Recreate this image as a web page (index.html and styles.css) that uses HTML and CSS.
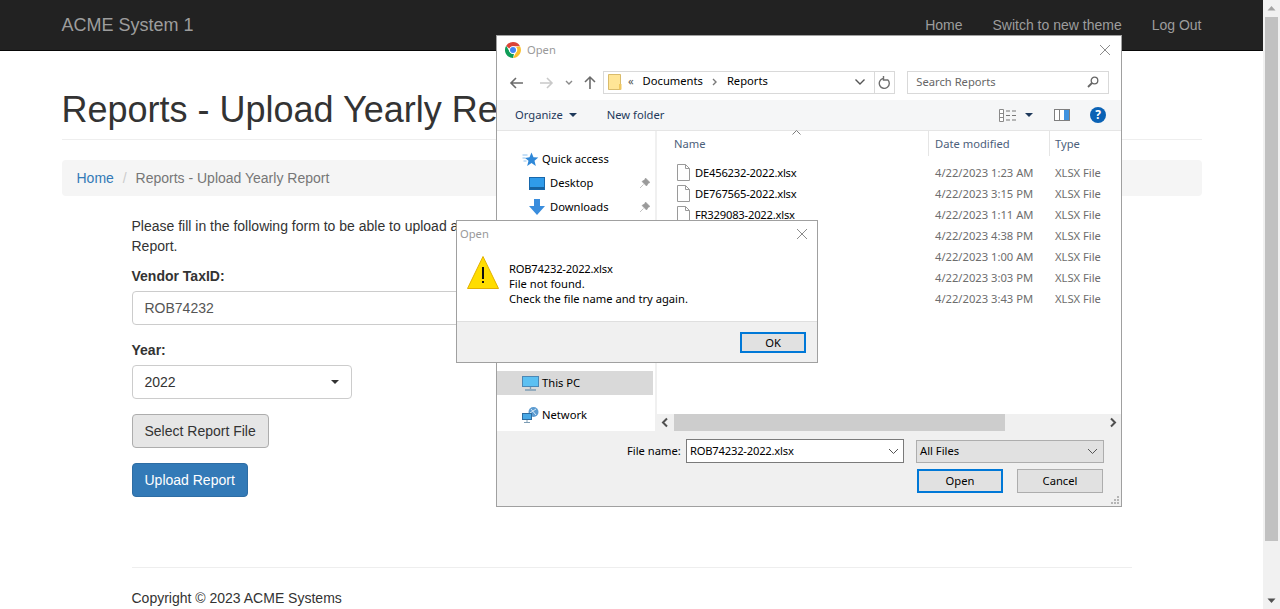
FILE: index.html
```html
<!DOCTYPE html>
<html lang="en">
<head>
  <meta charset="UTF-8">
  <meta name="viewport" content="width=device-width, initial-scale=1.0">
  <title>Reports - Upload Yearly Report</title>
  <link rel="stylesheet" href="styles.css">
</head>
<body>

<div class="page">
  <!-- Navbar -->
  <nav class="navbar">
    <a class="brand" href="#">ACME System 1</a>
    <div class="nav-links">
      <a href="#">Home</a>
      <a href="#">Switch to new theme</a>
      <a href="#">Log Out</a>
    </div>
  </nav>

  <div class="container">
    <h1 class="page-header">Reports - Upload Yearly Report</h1>

    <div class="breadcrumb">
      <a href="#">Home</a>
      <span class="crumb-sep">/</span>
      <span class="crumb-active">Reports - Upload Yearly Report</span>
    </div>

    <form class="report-form">
      <p class="intro">Please fill in the following form to be able to upload a<br>Report.</p>

      <div class="form-group">
        <label for="vendor">Vendor TaxID:</label>
        <input id="vendor" class="form-control" type="text" value="ROB74232">
      </div>

      <div class="form-group">
        <label>Year:</label>
        <div class="form-select"><span>2022</span><i class="caret"></i></div>
      </div>

      <div class="form-group"><button type="button" class="btn btn-default">Select Report File</button></div>
      <div class="form-group"><button type="button" class="btn btn-primary">Upload Report</button></div>

      <footer class="page-footer">Copyright © 2023 ACME Systems</footer>
    </form>
  </div>
</div>

<!-- Browser scrollbar -->
<div class="page-scrollbar">
  <svg class="scroll-arrow" width="17" height="17" viewBox="0 0 17 17"><path d="M4.5 10.5 L8.5 6 L12.5 10.5 Z" fill="#a3a3a3"/></svg>
  <div class="page-scroll-thumb"></div>
  <svg class="scroll-arrow scroll-arrow-end" width="17" height="17" viewBox="0 0 17 17"><path d="M4.5 6.5 L8.5 11 L12.5 6.5 Z" fill="#505050"/></svg>
</div>

<!-- Windows file dialog -->
<div class="win file-dialog">
  <div class="win-title">
    <svg class="chrome-icon" width="16" height="16" viewBox="0 0 16 16">
      <path d="M8 0 A8 8 0 0 1 15 4.2 L8 4.2 A3.8 3.8 0 0 0 4.4 6.8 L1.2 3.8 A8 8 0 0 1 8 0 Z" fill="#db4437"/>
      <path d="M15 4.2 A8 8 0 0 1 8 16 L11.2 10.2 A3.8 3.8 0 0 0 11 5 L15 4.2 Z" fill="#fbc02d"/>
      <path d="M8 16 A8 8 0 0 1 1.2 3.8 L4.6 9.8 A3.8 3.8 0 0 0 9 11.7 L8 16 Z" fill="#0f9d58"/>
      <circle cx="8" cy="8" r="3.8" fill="#fff"/>
      <circle cx="8" cy="8" r="3" fill="#4285f4"/>
    </svg>
    <span class="win-title-text">Open</span>
    <svg class="win-close" width="12" height="12" viewBox="0 0 12 12"><path d="M1 1 L11 11 M11 1 L1 11" stroke="#8c8c8c" fill="none"/></svg>
  </div>

  <div class="addr-row">
    <svg class="nav-arrow" width="15" height="14" viewBox="0 0 15 14"><path d="M14 7 H2 M7 2 L2 7 L7 12" stroke="#6b6b6b" stroke-width="1.6" fill="none"/></svg>
    <svg class="nav-arrow nav-forward" width="15" height="14" viewBox="0 0 15 14"><path d="M1 7 H13 M8 2 L13 7 L8 12" stroke="#c9c9c9" stroke-width="1.6" fill="none"/></svg>
    <svg class="nav-down" width="8" height="6" viewBox="0 0 8 6"><path d="M1 1 L4 4 L7 1" stroke="#8a8a8a" stroke-width="1.4" fill="none"/></svg>
    <svg class="nav-up" width="14" height="15" viewBox="0 0 14 15"><path d="M7 14 V2 M2 7 L7 2 L12 7" stroke="#6b6b6b" stroke-width="1.6" fill="none"/></svg>

    <div class="addr-box">
      <svg class="addr-folder" width="14" height="16" viewBox="0 0 14 16"><path d="M.5.5 H12.5 V15.5 H.5 Z" fill="#ffe596" stroke="#d9bb6b"/><path d="M11 10 H13.5 V15.5 H11 Z" fill="#f0c75e"/></svg>
      <span class="addr-text addr-chev">«</span>
      <span class="addr-text">Documents</span>
      <svg class="addr-sep" width="6" height="8" viewBox="0 0 6 8"><path d="M1 1 L4 4 L1 7" stroke="#7a7a7a" stroke-width="1.4" fill="none"/></svg>
      <span class="addr-text">Reports</span>
      <svg class="addr-drop" width="12" height="8" viewBox="0 0 12 8"><path d="M1.5 1.5 L6 6 L10.5 1.5" stroke="#555" stroke-width="1.4" fill="none"/></svg>
      <span class="addr-refresh">
        <svg width="13" height="14" viewBox="0 0 13 14"><path d="M5 3 A5 5 0 1 0 9.5 4 M5.500 .5 V4.500 H9.500" transform="translate(0 .5)" stroke="#6f6f6f" stroke-width="1.4" fill="none"/></svg>
      </span>
    </div>

    <div class="search-box">
      <span>Search Reports</span>
      <svg width="12" height="12" viewBox="0 0 12 12"><circle cx="7.500" cy="4.500" r="3.300" stroke="#666" stroke-width="1.300" fill="none"/><path d="M5 7 L1 11" stroke="#666" stroke-width="1.800"/></svg>
    </div>
  </div>

  <div class="toolbar">
    <span class="tool-organize">Organize<i class="tool-caret"></i></span>
    <span class="tool-new">New folder</span>
    <svg class="tool-views" width="17" height="13" viewBox="0 0 17 13">
      <path d="M.5.500 H4.500 V12.500 H.5 Z M.5 4.500 H4.500 M.5 8.500 H4.500" stroke="#8a8a8a" fill="#fff"/>
      <path d="M7 2 H11 M13 2 H17 M7 6.500 H11 M13 6.500 H17 M7 11 H11 M13 11 H17" stroke="#777"/>
    </svg>
    <i class="tool-caret tool-caret-views"></i>
    <svg class="tool-pane" width="16" height="12" viewBox="0 0 16 12">
      <rect x=".5" y=".5" width="15" height="11" fill="#fff" stroke="#7f7f7f"/>
      <path d="M5.500 0 V12" stroke="#7f7f7f"/>
      <rect x="10" y="1" width="5" height="10" fill="#3f92df"/>
    </svg>
    <span class="tool-help">?</span>
  </div>

  <div class="win-body">
    <aside class="tree">
      <div class="tree-item tree-root">
        <svg class="tree-icon" width="16" height="15" viewBox="0 0 16 15"><path d="M9 .5 L11 5.300 L15.800 5.600 L12 8.800 L13.300 14 L9 11 L4.700 14 L6 8.800 L2.500 6 L7 5.300 Z" fill="#2f88d8"/><path d="M0 3 H5 M0 6 H3 M1 9 H4" stroke="#8cc0ee"/></svg>
        <span>Quick access</span>
      </div>
      <div class="tree-item tree-child">
        <svg class="tree-icon" width="16" height="13" viewBox="0 0 16 13"><rect x=".5" y=".5" width="15" height="12" fill="#2f9bea" stroke="#1767ab"/><path d="M1 11 H15" stroke="#0f4f87" stroke-width="1.500"/></svg>
        <span>Desktop</span>
        <svg class="tree-pin" width="10" height="10" viewBox="0 0 10 10"><path d="M5.500 0 L10 4.500 L8.500 5 L6.500 8 L2 3.500 L5 1.500 Z M3.500 6.500 L0 10" fill="#9a9a9a" stroke="#9a9a9a" stroke-width=".6"/></svg>
      </div>
      <div class="tree-item tree-child">
        <svg class="tree-icon" width="16" height="16" viewBox="0 0 16 16"><path d="M5 0 H11 V7 H16 L8 16 L0 7 H5 Z" fill="#3a8ddd"/></svg>
        <span>Downloads</span>
        <svg class="tree-pin" width="10" height="10" viewBox="0 0 10 10"><path d="M5.500 0 L10 4.500 L8.500 5 L6.500 8 L2 3.500 L5 1.500 Z M3.500 6.500 L0 10" fill="#9a9a9a" stroke="#9a9a9a" stroke-width=".6"/></svg>
      </div>
      <div class="tree-item tree-root tree-selected">
        <svg class="tree-icon" width="17" height="15" viewBox="0 0 17 15"><rect x=".5" y=".5" width="16" height="10" fill="#5cc0f2" stroke="#4b87b5"/><path d="M8.500 11 V13 M3 14 H14" stroke="#7d9db5" stroke-width="1.300"/></svg>
        <span>This PC</span>
      </div>
      <div class="tree-item tree-root tree-network">
        <svg class="tree-icon" width="17" height="16" viewBox="0 0 17 16"><circle cx="11.500" cy="5" r="5" fill="#5c9bd0"/><path d="M9 2 L14 8 M8 6 L14 2" stroke="#d6e9f7"/><rect x=".5" y="6.500" width="9" height="6" fill="#49a9e6" stroke="#2f6c9f"/><path d="M5 13 V15 M2 15.500 H8" stroke="#7d9db5"/></svg>
        <span>Network</span>
      </div>
    </aside>

    <div class="files">
      <div class="files-head">
        <div class="col-name">Name
          <svg class="sort-mark" width="9" height="5" viewBox="0 0 9 5"><path d="M.5 4.500 L4.500 .5 L8.500 4.500" stroke="#7d7d7d" fill="none"/></svg>
        </div>
        <div class="col-date">Date modified</div>
        <div class="col-type">Type</div>
      </div>

      <div class="files-rows">
        <div class="file-row">
          <div class="col-name"><svg class="file-icon" width="13" height="17" viewBox="0 0 13 17"><path d="M.5.5 H8.500 L12.500 4.500 V16.500 H.5 Z M8.500.5 V4.500 H12.500" fill="#fff" stroke="#9a9a9a"/></svg>DE456232-2022.xlsx</div>
          <div class="col-date">4/22/2023 1:23 AM</div><div class="col-type">XLSX File</div>
        </div>
        <div class="file-row">
          <div class="col-name"><svg class="file-icon" width="13" height="17" viewBox="0 0 13 17"><path d="M.5.5 H8.500 L12.500 4.500 V16.500 H.5 Z M8.500.5 V4.500 H12.500" fill="#fff" stroke="#9a9a9a"/></svg>DE767565-2022.xlsx</div>
          <div class="col-date">4/22/2023 3:15 PM</div><div class="col-type">XLSX File</div>
        </div>
        <div class="file-row">
          <div class="col-name"><svg class="file-icon" width="13" height="17" viewBox="0 0 13 17"><path d="M.5.5 H8.500 L12.500 4.500 V16.500 H.5 Z M8.500.5 V4.500 H12.500" fill="#fff" stroke="#9a9a9a"/></svg>FR329083-2022.xlsx</div>
          <div class="col-date">4/22/2023 1:11 AM</div><div class="col-type">XLSX File</div>
        </div>
        <div class="file-row"><div class="col-name"></div><div class="col-date">4/22/2023 4:38 PM</div><div class="col-type">XLSX File</div></div>
        <div class="file-row"><div class="col-name"></div><div class="col-date">4/22/2023 1:00 AM</div><div class="col-type">XLSX File</div></div>
        <div class="file-row"><div class="col-name"></div><div class="col-date">4/22/2023 3:03 PM</div><div class="col-type">XLSX File</div></div>
        <div class="file-row"><div class="col-name"></div><div class="col-date">4/22/2023 3:43 PM</div><div class="col-type">XLSX File</div></div>
      </div>

      <div class="h-scroll">
        <svg width="17" height="17" viewBox="0 0 17 17"><path d="M10 4.500 L6 8.500 L10 12.500" stroke="#505050" stroke-width="2" fill="none"/></svg>
        <div class="h-scroll-track"><div class="h-scroll-thumb"></div></div>
        <svg width="17" height="17" viewBox="0 0 17 17"><path d="M7 4.500 L11 8.500 L7 12.500" stroke="#505050" stroke-width="2" fill="none"/></svg>
      </div>
    </div>
  </div>

  <div class="win-bottom">
    <div class="name-row">
      <span class="name-label">File name:</span>
      <div class="name-input">
        <span class="file-name">ROB74232-2022.xlsx</span>
        <svg width="11" height="7" viewBox="0 0 11 7"><path d="M1 1 L5.500 5.500 L10 1" stroke="#555" fill="none"/></svg>
      </div>
      <div class="type-select">
        <span>All Files</span>
        <svg width="11" height="7" viewBox="0 0 11 7"><path d="M1 1 L5.500 5.500 L10 1" stroke="#555" fill="none"/></svg>
      </div>
    </div>
    <div class="btn-row">
      <span class="win-btn win-btn-focus">Open</span>
      <span class="win-btn">Cancel</span>
    </div>
    <svg class="grip" width="10" height="10" viewBox="0 0 10 10"><path d="M7 1h2v2H7z M4 4h2v2H4z M7 4h2v2H7z M1 7h2v2H1z M4 7h2v2H4z M7 7h2v2H7z" fill="#b5b5b5"/></svg>
  </div>
</div>

<!-- Message box over the file dialog -->
<div class="win msg-box">
  <div class="msg-title">
    <span class="win-title-text">Open</span>
    <svg class="win-close" width="12" height="12" viewBox="0 0 12 12"><path d="M1 1 L11 11 M11 1 L1 11" stroke="#8c8c8c" fill="none"/></svg>
  </div>
  <div class="msg-body">
    <svg class="msg-icon" width="32" height="33" viewBox="0 0 32 33">
      <path d="M16 .5 L31.500 32.500 H.5 Z" fill="#ffdd00" stroke="#e2b100"/>
      <rect x="15" y="11" width="2" height="12" fill="#111"/>
      <rect x="15" y="25" width="2" height="2" fill="#111"/>
    </svg>
    <div class="msg-text">
      <div class="file-name">ROB74232-2022.xlsx</div>
      <div>File not found.</div>
      <div>Check the file name and try again.</div>
    </div>
  </div>
  <div class="msg-foot">
    <span class="win-btn win-btn-focus msg-ok">OK</span>
  </div>
</div>

</body>
</html>
```

FILE: styles.css
```css
* {
  box-sizing: border-box;
}

html,
body {
  margin: 0;
  height: 609px;
  overflow: hidden;
}

body {
  display: flex;
  background-color: #fff;
  color: #333;
  font-family: "Liberation Sans", Arial, sans-serif;
  font-size: 14px;
  line-height: 20px;
}

a {
  text-decoration: none;
}

.page {
  flex: 1;
  min-width: 0;
}

/* Navbar */
.navbar {
  display: flex;
  justify-content: space-between;
  align-items: center;
  height: 51px;
  padding: 0 61.5px;
  background-color: #222;
  border-bottom: 1px solid #080808;
}

.brand {
  color: #9d9d9d;
  font-size: 18px;
}

.nav-links {
  display: flex;
  gap: 30px;
}

.nav-links a {
  color: #9d9d9d;
}

/* Page content */
.container {
  padding: 0 61.5px;
}

.page-header {
  margin: 39px 0 20px;
  padding-bottom: 9px;
  border-bottom: 1px solid #eee;
  color: #333;
  font-size: 36px;
  font-weight: 500;
  line-height: 39.6px;
  white-space: nowrap;
}

.breadcrumb {
  height: 36px;
  padding: 8px 15px;
  background-color: #f5f5f5;
  border-radius: 4px;
}

.breadcrumb a {
  color: #337ab7;
}

.crumb-sep {
  padding: 0 5px;
  color: #ccc;
}

.crumb-active {
  color: #777;
}

.report-form {
  width: 1000.5px;
  margin: 20px 0 0 70px;
}

.intro {
  margin: 0 0 10px;
}

.form-group {
  margin-bottom: 15px;
}

.form-group label {
  display: block;
  margin-bottom: 5px;
  font-weight: bold;
}

.form-control {
  display: block;
  width: 500px;
  height: 34px;
  padding: 6px 12px;
  border: 1px solid #ccc;
  border-radius: 4px;
  color: #555;
  font: inherit;
}

.form-select {
  display: flex;
  justify-content: space-between;
  align-items: center;
  width: 220px;
  height: 34px;
  padding: 6px 12px;
  border: 1px solid #ccc;
  border-radius: 4px;
  color: #333;
}

.caret {
  border-top: 4px solid #333;
  border-left: 4px solid transparent;
  border-right: 4px solid transparent;
}

.btn {
  height: 34px;
  padding: 6px 12px;
  border: 1px solid transparent;
  border-radius: 4px;
  font: inherit;
}

.btn-default {
  background-color: #e6e6e6;
  border-color: #adadad;
  color: #333;
}

.btn-primary {
  background-color: #337ab7;
  border-color: #2e6da4;
  color: #fff;
}

.page-footer {
  margin-top: 70px;
  padding-top: 20px;
  border-top: 1px solid #eee;
}

/* Browser scrollbar */
.page-scrollbar {
  display: flex;
  flex-direction: column;
  flex: none;
  width: 17px;
  height: 609px;
  background-color: #f1f1f1;
}

.scroll-arrow {
  display: block;
  flex: none;
}

.scroll-arrow-end {
  margin-top: auto;
}

.page-scroll-thumb {
  height: 524px;
  margin: 0 2px;
  background-color: #c1c1c1;
}

/* Windows dialogs */
.win {
  position: absolute;
  display: flex;
  flex-direction: column;
  background-color: #fff;
  border: 1px solid #a0a0a0;
  color: #000;
  font-family: "Noto Sans", "Open Sans", sans-serif;
  font-size: 11.2px;
  line-height: 16px;
}

.file-name {
  letter-spacing: -0.2px;
}

.file-dialog {
  left: 496px;
  top: 35px;
  width: 626px;
  height: 472px;
}

.win-title {
  display: flex;
  align-items: center;
  flex: none;
  height: 29px;
  padding: 0 10px 2px 8px;
}

.chrome-icon {
  margin-right: 6px;
}

.win-title-text {
  color: #999;
}

.win-close {
  margin-left: auto;
}

.addr-row {
  display: flex;
  align-items: center;
  flex: none;
  height: 35px;
  padding: 0 12px 0 12px;
}

.nav-forward {
  margin-left: 15px;
}

.nav-down {
  margin-left: 11px;
}

.nav-up {
  margin-left: 10px;
}

.addr-box {
  display: flex;
  align-items: center;
  gap: 6px;
  width: 293px;
  height: 23px;
  margin-left: 6px;
  padding-left: 4px;
  padding-bottom: 1px;
  border: 1px solid #d9d9d9;
}

.addr-text {
  margin-bottom: 2px;
}

.addr-chev {
  margin-right: 3px;
  color: #555;
}

.addr-sep {
  margin: 0 3px;
}

.addr-drop {
  margin-left: auto;
  margin-right: 2px;
}

.addr-refresh {
  display: flex;
  align-items: center;
  justify-content: center;
  width: 20px;
  height: 21px;
  border-left: 1px solid #d9d9d9;
}

.search-box {
  display: flex;
  align-items: center;
  justify-content: space-between;
  width: 202px;
  height: 23px;
  margin-left: 12px;
  padding: 0 9px 1px 8px;
  border: 1px solid #d9d9d9;
  color: #666;
}

.toolbar {
  display: flex;
  align-items: center;
  flex: none;
  height: 31px;
  padding: 0 15px 0 18px;
  background-color: #f5f6f7;
  border-bottom: 1px solid #e5e5e5;
  color: #1e395b;
}

.tool-organize {
  display: flex;
  align-items: center;
}

.tool-caret {
  display: inline-block;
  margin-left: 6px;
  border-top: 4px solid #1e395b;
  border-left: 4px solid transparent;
  border-right: 4px solid transparent;
}

.tool-new {
  margin-left: 30px;
}

.tool-views {
  margin-left: auto;
}

.tool-caret-views {
  margin-left: 9px;
}

.tool-pane {
  margin-left: 21px;
}

.tool-help {
  display: flex;
  align-items: center;
  justify-content: center;
  width: 16px;
  height: 16px;
  margin-left: 20px;
  background-color: #0a62b5;
  border-radius: 50%;
  color: #fff;
  font-size: 12px;
  font-weight: bold;
}

.win-body {
  display: flex;
  flex: none;
  height: 300px;
}

/* Navigation pane */
.tree {
  flex: none;
  width: 160px;
  padding-top: 16px;
  border-right: 2px solid #f0f0f0;
}

.tree-item {
  display: flex;
  align-items: center;
  height: 24px;
  width: 156px;
}

.tree-root {
  padding-left: 25px;
}

.tree-root .tree-icon {
  width: 17px;
}

.tree-root span {
  margin-left: 3px;
}

.tree-child {
  padding-left: 32px;
}

.tree-child span {
  margin-left: 5px;
}

.tree-icon {
  flex: none;
}

.tree-pin {
  margin-left: auto;
  margin-right: 3px;
}

.tree-selected {
  margin-top: 152px;
  background-color: #d9d9d9;
}

.tree-network {
  margin-top: 8px;
}

/* File list */
.files {
  display: flex;
  flex-direction: column;
  flex: 1;
  min-width: 0;
}

.files-head,
.file-row {
  display: flex;
}

.files-head {
  flex: none;
  height: 25px;
  color: #4c607a;
}

.files-head .col-name {
  position: relative;
  align-items: flex-start;
  padding-top: 5px;
}

.files-head .col-date,
.files-head .col-type {
  padding-top: 5px;
  border-left: 1px solid #e5e5e5;
}

.files-head .col-date {
  padding-left: 6px;
}

.files-head .col-type {
  padding-left: 5px;
}

.sort-mark {
  position: absolute;
  top: -1px;
  left: 135px;
}

.col-name {
  display: flex;
  align-items: center;
  flex: none;
  width: 271px;
  padding-left: 17px;
}

.col-date {
  flex: none;
  width: 121px;
  padding-left: 7px;
}

.col-type {
  flex: 1;
  padding-left: 6px;
}

.files-rows {
  flex: 1;
  padding-top: 6px;
  color: #6d6d6d;
}

.file-row {
  height: 21px;
  align-items: center;
}

.file-row .col-name {
  color: #000;
  letter-spacing: -0.2px;
}

.file-icon {
  flex: none;
  margin: 0 5px 0 3px;
}

.h-scroll {
  display: flex;
  flex: none;
  height: 17px;
  background-color: #f0f0f0;
}

.h-scroll svg {
  flex: none;
}

.h-scroll-track {
  flex: 1;
}

.h-scroll-thumb {
  width: 331px;
  height: 100%;
  background-color: #cdcdcd;
}

/* Dialog bottom */
.win-bottom {
  position: relative;
  flex: 1;
  padding: 8px 17px 0 130px;
  background-color: #f0f0f0;
}

.name-row {
  display: flex;
  align-items: center;
  height: 24px;
}

.name-label {
  width: 59px;
  color: #000;
}

.name-input {
  display: flex;
  align-items: center;
  justify-content: space-between;
  width: 218px;
  height: 24px;
  padding: 0 4px 0 3px;
  background-color: #fff;
  border: 1px solid #7a7a7a;
}

.type-select {
  display: flex;
  align-items: center;
  justify-content: space-between;
  width: 188px;
  height: 23px;
  margin-left: 12px;
  padding: 0 5px 0 3px;
  background-color: #e1e1e1;
  border: 1px solid #adadad;
}

.btn-row {
  display: flex;
  justify-content: flex-end;
  gap: 14px;
  margin-top: 6px;
  padding-right: 1px;
}

.win-btn {
  display: flex;
  align-items: center;
  justify-content: center;
  width: 86px;
  height: 24px;
  background-color: #e1e1e1;
  border: 1px solid #adadad;
}

.win-btn-focus {
  border: 2px solid #0078d7;
}

.grip {
  position: absolute;
  right: 1px;
  bottom: 1px;
}

/* Message box */
.msg-box {
  left: 456px;
  top: 220px;
  width: 362px;
  height: 143px;
}

.msg-title {
  display: flex;
  align-items: center;
  flex: none;
  height: 25px;
  padding: 0 9px 0 3px;
}

.msg-body {
  display: flex;
  flex: none;
  height: 75px;
  padding: 10px 0 0 10px;
}

.msg-text {
  margin-left: 10px;
  padding-top: 5px;
  line-height: 15px;
}

.msg-foot {
  display: flex;
  justify-content: flex-end;
  flex: 1;
  padding: 10px 11px 0 0;
  background-color: #f0f0f0;
  border-top: 1px solid #dfdfdf;
}

.msg-ok {
  width: 66px;
  height: 21px;
}
```
